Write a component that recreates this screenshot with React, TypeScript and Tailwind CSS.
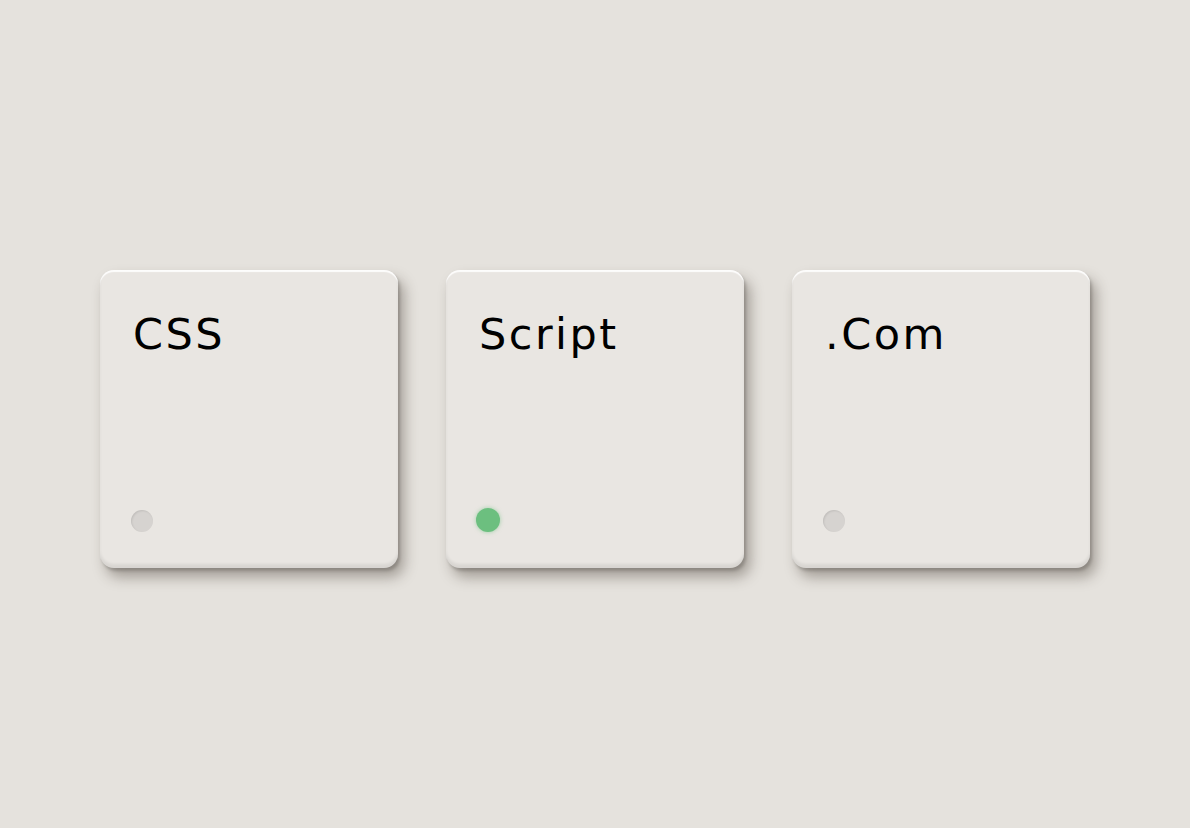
const keys = [
  { label: "CSS", on: false },
  { label: "Script", on: true },
  { label: ".Com", on: false },
];

const Key = ({ label, on }: { label: string; on: boolean }) => {
  return (
    <div className="relative w-[298px] h-[298px] rounded-[14px] bg-[#e9e6e2] shadow-[inset_0_-4px_3px_rgba(0,0,0,0.07),inset_0_2px_1px_rgba(255,255,255,0.9),6px_9px_14px_rgba(60,50,40,0.4),2px_3px_3px_rgba(0,0,0,0.18)]">
      <div className="flex flex-col justify-between h-full pt-[40px] pb-[36px] pl-[33px]">
        <h1 className="text-[43px] leading-[48px] tracking-[2.5px] text-black font-['DejaVu_Sans',sans-serif]">
          {label}
        </h1>
        <span
          className={
            on
              ? "block w-[24px] h-[24px] -ml-[3px] rounded-full bg-[#6cbf7f] shadow-[0_0_4px_rgba(108,191,127,0.6)]"
              : "block w-[22px] h-[22px] -ml-[2px] rounded-full bg-[#d6d3d0] shadow-[inset_1px_1px_2px_rgba(0,0,0,0.1)]"
          }
        />
      </div>
    </div>
  );
};

export default function App() {
  return (
    <div className="min-h-screen w-full bg-[#e5e2dd] flex items-center justify-center pt-[10px]">
      <div className="flex gap-[48px]">
        {keys.map((k) => (
          <Key key={k.label} label={k.label} on={k.on} />
        ))}
      </div>
    </div>
  );
}
